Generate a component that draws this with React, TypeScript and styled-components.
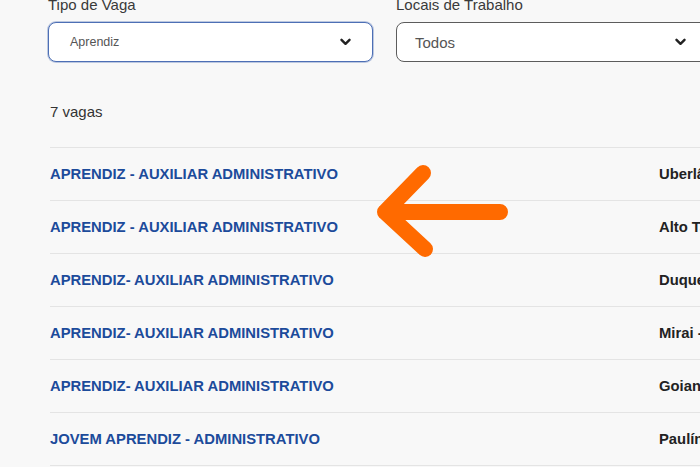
import styled, { createGlobalStyle } from "styled-components";

const GlobalStyle = createGlobalStyle`
	html, body {
		margin: 0;
		padding: 0;
		background: #f8f8f8;
		overflow: hidden;
	}
	body {
		font-family: "Liberation Sans", Arial, sans-serif;
	}
`;

const Page = styled.main`
	position: relative;
	width: 700px;
	height: 467px;
	overflow: hidden;
	padding-left: 48px;
	box-sizing: border-box;
`;

const Filters = styled.div`
	display: grid;
	grid-template-columns: 325px 312px;
	column-gap: 23px;
	margin-top: -4px;
`;

const Field = styled.div`
	display: flex;
	flex-direction: column;
	gap: 8px;
`;

const Label = styled.label`
	font-size: 15px;
	line-height: 18px;
	color: #3a3a3a;
`;

const Select = styled.div<{ $focused?: boolean; $small?: boolean }>`
	display: flex;
	align-items: center;
	justify-content: space-between;
	height: 40px;
	box-sizing: border-box;
	background: #fff;
	border-radius: 8px;
	border: 1px solid ${(p) => (p.$focused ? "#4d6fb5" : "#5c5c5c")};
	box-shadow: ${(p) => (p.$focused ? "0 0 0 1px rgba(77, 111, 181, 0.35)" : "none")};
	padding: 0 21px 0 ${(p) => (p.$small ? "21px" : "18px")};
	font-size: ${(p) => (p.$small ? "12.5px" : "15px")};
	color: #555;
`;

const Chevron = () => (
	<svg width="11" height="8" viewBox="0 0 11 8">
		<path d="M1.5 1.8 L5.5 5.8 L9.5 1.8" fill="none" stroke="#222" strokeWidth="2.4" strokeLinecap="round" strokeLinejoin="round" />
	</svg>
);

const Count = styled.p`
	margin: 41px 0 0 2px;
	font-size: 15px;
	color: #333;
`;

const List = styled.ul`
	list-style: none;
	margin: 27px 0 0 2px;
	padding: 0;
`;

const Row = styled.li`
	display: grid;
	grid-template-columns: 609px auto;
	align-items: center;
	height: 53px;
	border-top: 1px solid #e4e4e4;
	box-sizing: border-box;
	white-space: nowrap;
	font-size: 14.8px;
	font-weight: 700;
`;

const Title = styled.a`
	color: #1c4b9b;
	text-decoration: none;
`;

const Place = styled.span`
	color: #222;
`;

const Arrow = styled.svg`
	position: absolute;
	left: 366px;
	top: 160px;
`;

const jobs = [
	{ title: "APRENDIZ - AUXILIAR ADMINISTRATIVO", place: "Uberlândia - MG" },
	{ title: "APRENDIZ - AUXILIAR ADMINISTRATIVO", place: "Alto Taquari - MT" },
	{ title: "APRENDIZ- AUXILIAR ADMINISTRATIVO", place: "Duque de Caxias - RJ" },
	{ title: "APRENDIZ- AUXILIAR ADMINISTRATIVO", place: "Mirai - MG" },
	{ title: "APRENDIZ- AUXILIAR ADMINISTRATIVO", place: "Goiania - GO" },
	{ title: "JOVEM APRENDIZ - ADMINISTRATIVO", place: "Paulínia - SP" },
	{ title: "JOVEM APRENDIZ - ADMINISTRATIVO", place: "São Paulo - SP" },
];

function App() {
	return (
		<>
			<GlobalStyle />
			<Page>
				<Filters>
					<Field>
						<Label>Tipo de Vaga</Label>
						<Select $focused $small>
							<span>Aprendiz</span>
							<Chevron />
						</Select>
					</Field>
					<Field>
						<Label>Locais de Trabalho</Label>
						<Select>
							<span>Todos</span>
							<Chevron />
						</Select>
					</Field>
				</Filters>
				<Count>7 vagas</Count>
				<List>
					{jobs.map((job, i) => (
						<Row key={i}>
							<Title href="#">{job.title}</Title>
							<Place>{job.place}</Place>
						</Row>
					))}
				</List>
				<Arrow width="160" height="110" viewBox="0 0 160 110">
					<path
						d="M134 52 L19 52 M57 13 L19 52 L59 89"
						fill="none"
						stroke="#ff6a00"
						strokeWidth="16"
						strokeLinecap="round"
						strokeLinejoin="round"
					/>
				</Arrow>
			</Page>
		</>
	);
}

export default App;
